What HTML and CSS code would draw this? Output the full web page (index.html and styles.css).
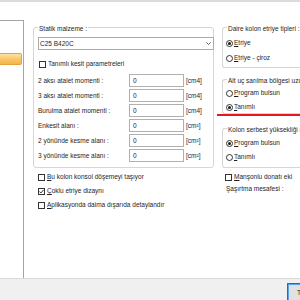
FILE: index.html
```html
<!DOCTYPE html>
<html>
<head>
<meta charset="utf-8">
<link rel="stylesheet" href="styles.css">
</head>
<body>
<div class="topline"></div>
<div class="main">
  <div class="sidebar"><div class="sel-item"></div></div>
  <div class="content">
    <div class="col">
      <div class="group group-static">
        <div class="group-title">Statik malzeme :</div>
        <div class="combo">
          <span class="combo-text">C25 B420C</span>
          <svg class="chev" width="5" height="3" viewBox="0 0 5 3"><path d="M0.4 0.4 L2.5 2.5 L4.6 0.4" fill="none" stroke="#333" stroke-width="0.8"/></svg>
        </div>
        <div class="check check-first"><span class="box"></span><span>Tanımlı kesit parametreleri</span></div>
        <div class="fields">
          <span class="flabel">2 aksı atalet momenti :</span><span class="input">0</span><span class="unit">[cm4]</span>
          <span class="flabel">3 aksı atalet momenti :</span><span class="input">0</span><span class="unit">[cm4]</span>
          <span class="flabel">Burulma atalet momenti :</span><span class="input">0</span><span class="unit">[cm4]</span>
          <span class="flabel">Enkesit alanı :</span><span class="input">0</span><span class="unit">[cm²]</span>
          <span class="flabel">2 yönünde kesme alanı :</span><span class="input">0</span><span class="unit">[cm²]</span>
          <span class="flabel">3 yönünde kesme alanı :</span><span class="input">0</span><span class="unit">[cm²]</span>
        </div>
      </div>
      <div class="checks">
        <div class="check"><span class="box"></span><span><u>B</u>u kolon konsol döşemeyi taşıyor</span></div>
        <div class="check"><span class="box checked"><svg width="5" height="5" viewBox="0 0 5 5"><path d="M0.4 2.5 L1.9 4 L4.6 0.8" fill="none" stroke="#222" stroke-width="0.9"/></svg></span><span><u>Ç</u>oklu etriye dizaynı</span></div>
        <div class="check"><span class="box"></span><span><u>A</u>plikasyonda daima dışarıda detaylandır</span></div>
      </div>
    </div>
    <div class="col col-right">
      <div class="group group-r1">
        <div class="group-title">Daire kolon etriye tipleri :</div>
        <div class="radio r-first"><span class="dot on"></span><span><u>E</u>triye</span></div>
        <div class="radio"><span class="dot"></span><span><u>E</u>triye - çiroz</span></div>
      </div>
      <div class="group group-r2">
        <div class="group-title">Alt uç sarılma bölgesi uzunluğu</div>
        <div class="radio r-first"><span class="dot"></span><span><u>P</u>rogram bulsun</span></div>
        <div class="radio"><span class="dot on"></span><span><u>T</u>anımlı</span></div>
      </div>
      <div class="group group-r3">
        <div class="group-title">Kolon serbest yüksekliği (m)</div>
        <div class="radio r-first"><span class="dot on"></span><span><u>P</u>rogram bulsun</span></div>
        <div class="radio"><span class="dot"></span><span><u>T</u>anımlı</span></div>
      </div>
      <div class="check check-r"><span class="box"></span><span><u>M</u>anşonlu donatı eki</span></div>
      <div class="plain">Şaşırtma mesafesi :</div>
    </div>
  </div>
</div>
<div class="footer"><div class="btn">Tamam</div></div>
</body>
</html>
```
FILE: styles.css
```css
* { box-sizing: border-box; }
html, body { margin: 0; padding: 0; }
body {
  width: 300px;
  height: 300px;
  overflow: hidden;
  display: flex;
  flex-direction: column;
  background: #ffffff;
  font-family: "Liberation Sans", Arial, sans-serif;
  font-size: 6.5px;
  line-height: 8px;
  color: #1e1e1e;
}
u { text-decoration: underline; text-underline-offset: 1px; }
.topline { height: 2px; flex: none; background: #dcdcdc; }
.main { flex: 1; display: flex; min-height: 0; }
.sidebar {
  width: 24px;
  flex: none;
  margin-top: 18px;
  border-top: 1px solid #a5a5a5;
  border-right: 1px solid #a5a5a5;
}
.sel-item {
  margin-top: 32px;
  width: 22px;
  height: 12px;
  border: 1px solid #e2a43e;
  border-left: none;
  border-radius: 0 2px 2px 0;
  background: linear-gradient(#fde2a4, #f9c766 50%, #f4b44c);
}
.content {
  flex: 1;
  padding: 25px 0 0 9px;
  display: grid;
  grid-template-columns: 181px 1fr;
  column-gap: 8px;
  align-items: start;
  overflow: hidden;
}
.col { display: flex; flex-direction: column; }
.group {
  border: 1px solid #d6d6d6;
  border-radius: 3px;
  display: flex;
  flex-direction: column;
}
.group-title {
  margin: -3px 0 0 4px;
  padding: 0 1px;
  background: #ffffff;
  width: fit-content;
  white-space: nowrap;
  height: 8px;
}
.group-static { padding-bottom: 5px; }
.combo {
  margin: 4px -1px 0 4px;
  height: 13px;
  border: 1px solid #ababab;
  display: flex;
  align-items: center;
  justify-content: space-between;
  padding: 0 2px 0 1px;
}
.chev { display: block; }
.check {
  display: flex;
  align-items: center;
  gap: 2px;
  height: 8px;
  white-space: nowrap;
}
.box {
  width: 7px;
  height: 7px;
  flex: none;
  border: 1px solid #333333;
  background: #ffffff;
  display: flex;
  align-items: center;
  justify-content: center;
}
.box svg { display: block; }
.check-first { margin: 10px 0 0 5px; }
.fields {
  margin: 6px 0 0 4px;
  display: grid;
  grid-template-columns: 89px 55px auto;
  grid-auto-rows: 13px;
  row-gap: 2px;
  column-gap: 2px;
  align-items: center;
}
.flabel { white-space: nowrap; }
.input {
  height: 13px;
  border: 1px solid #b0b0b0;
  padding-left: 3px;
  display: flex;
  align-items: center;
}
.unit { white-space: nowrap; }
.checks {
  margin: 5px 0 0 5px;
  display: flex;
  flex-direction: column;
  gap: 6px;
}
.col-right { white-space: nowrap; }
.col-right .group { border-right: none; border-radius: 3px 0 0 3px; }
.radio {
  display: flex;
  align-items: center;
  gap: 1px;
  height: 8px;
  margin-left: 3px;
}
.dot {
  width: 7px;
  height: 7px;
  flex: none;
  border: 1px solid #333333;
  border-radius: 50%;
  display: flex;
  align-items: center;
  justify-content: center;
}
.dot.on::before {
  content: "";
  width: 3px;
  height: 3px;
  border-radius: 50%;
  background: #1a1a1a;
}
.group-r1 { padding-bottom: 5px; }
.group-r1 .r-first { margin-top: 6px; }
.group-r1 .radio + .radio { margin-top: 7px; }
.group-r2 { margin-top: 11px; padding-bottom: 2px; position: relative; }
.group-r2 .r-first { margin-top: 4px; }
.group-r2 .radio + .radio { margin-top: 6px; }
.group-r2::after {
  content: "";
  position: absolute;
  left: -6px;
  right: -120px;
  bottom: -3px;
  height: 2px;
  background: #e3191f;
}
.group-r3 { margin-top: 14px; padding-bottom: 6px; }
.group-r3 .r-first { margin-top: 5px; }
.group-r3 .radio + .radio { margin-top: 6px; }
.check-r { margin: 5px 0 0 3px; }
.plain { margin: 4px 0 0 4px; height: 8px; }
.footer {
  height: 22px;
  flex: none;
  background: #f0f0f0;
  border-top: 1px solid #dadada;
  padding: 4px 0 0 287px;
  overflow: hidden;
}
.btn {
  width: 60px;
  height: 22px;
  border: 1px solid #0078d7;
  box-shadow: inset 0 0 0 1px #5aa3e8;
  background: #e1e1e1;
  padding: 5px 0 0 9px;
  white-space: nowrap;
}
```
